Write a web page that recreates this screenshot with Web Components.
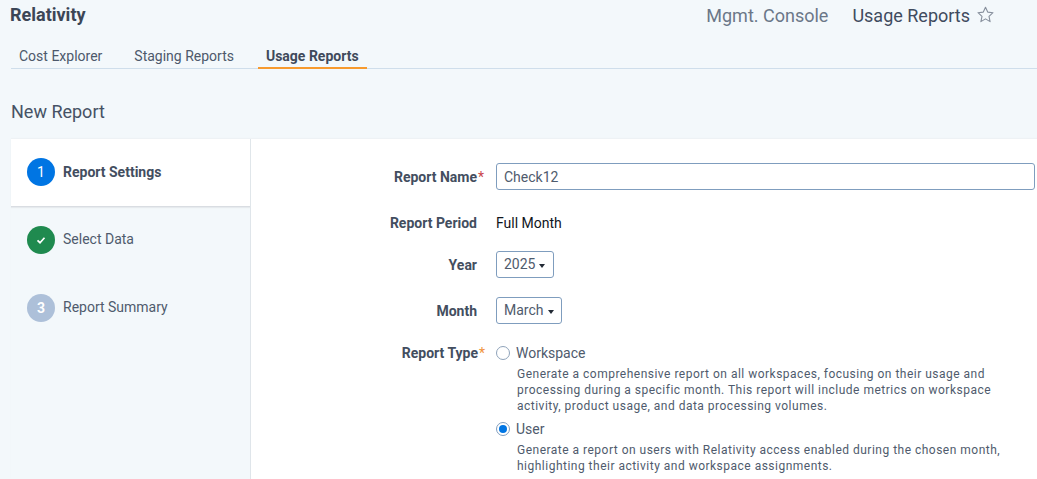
<!DOCTYPE html>
<html>
<head>
<meta charset="utf-8">
<title>New Report</title>
<style>
html, body { margin: 0; height: 479px; overflow: hidden; background: #f3f8fb; font-family: Roboto, "Liberation Sans", sans-serif; }
</style>
</head>
<body>
<app-header></app-header>
<nav-tabs></nav-tabs>
<page-title>New Report</page-title>
<report-wizard>
    <wizard-steps slot="steps"></wizard-steps>
    <report-form slot="form"></report-form>
</report-wizard>

<script>
class AppHeader extends HTMLElement {
    constructor(){
        super();
        this.attachShadow({mode:'open'});
        this.shadowRoot.innerHTML = `
            <style>
                :host{
                    display: flex;
                    height: 41px;
                    box-sizing: border-box;
                    padding: 5px 43px 0 10px;
                    justify-content: space-between;
                    color: #3e4a5c;
                }
                .brand{
                    font-size: 18px;
                    line-height: 20px;
                    font-weight: 700;
                    color: #3c4656;
                }
                .crumbs{
                    display: flex;
                    align-items: flex-start;
                    font-size: 18px;
                    line-height: 22px;
                }
                .parent{
                    color: #6b7788;
                    margin-right: 24px;
                }
                .current{
                    color: #3f4b5e;
                }
                svg{
                    margin: 1px 0 0 7px;
                }
            </style>
            <div class="brand">Relativity</div>
            <div class="crumbs">
                <span class="parent">Mgmt. Console</span>
                <span class="current">Usage Reports</span>
                <svg width="17" height="17" viewBox="0 0 17 17"><path d="M8.5 1.2l2.2 4.9 5.3.6-4 3.6 1.1 5.3-4.6-2.7-4.6 2.7 1.1-5.3-4-3.6 5.3-.6z" fill="none" stroke="#868f9c" stroke-width="1.1" stroke-linejoin="round"/></svg>
            </div>
        `;
    }
}

class NavTabs extends HTMLElement {
    constructor(){
        super();
        this.attachShadow({mode:'open'});
        this.shadowRoot.innerHTML = `
            <style>
                :host{
                    display: flex;
                    height: 28px;
                    box-sizing: border-box;
                    margin-left: 11px;
                    border-bottom: 1px solid #cfdeeb;
                    font-size: 14px;
                    color: #4d596b;
                }
                a{
                    display: block;
                    box-sizing: border-box;
                    height: 28px;
                    line-height: 30px;
                    padding: 0 8px;
                    margin-right: 16px;
                }
                a.on{
                    font-weight: 700;
                    color: #3f4a5b;
                    border-bottom: 2px solid #f79a2e;
                    margin-right: 0;
                }
            </style>
            <a>Cost Explorer</a>
            <a>Staging Reports</a>
            <a class="on">Usage Reports</a>
        `;
    }
}

class PageTitle extends HTMLElement {
    constructor(){
        super();
        this.attachShadow({mode:'open'});
        this.shadowRoot.innerHTML = `
            <style>
                :host{
                    display: block;
                    height: 70px;
                    box-sizing: border-box;
                    padding: 32px 0 0 11px;
                    font-size: 18px;
                    line-height: 22px;
                    color: #465265;
                }
            </style>
            <slot></slot>
        `;
    }
}

class ReportWizard extends HTMLElement {
    constructor(){
        super();
        this.attachShadow({mode:'open'});
        this.shadowRoot.innerHTML = `
            <style>
                :host{
                    display: flex;
                    height: 340px;
                    margin-left: 11px;
                    background: #fff;
                    box-shadow: 0 -1px 1px #eef2f5;
                }
            </style>
            <slot name="steps"></slot>
            <slot name="form"></slot>
        `;
    }
}

class WizardSteps extends HTMLElement {
    constructor(){
        super();
        this.attachShadow({mode:'open'});
        this.shadowRoot.innerHTML = `
            <style>
                :host{
                    display: block;
                    flex: none;
                    width: 240px;
                    box-sizing: border-box;
                    background: #f3f8fb;
                    border-right: 1px solid #dfe5ea;
                }
            </style>
            <step-item state="active" num="1">Report Settings</step-item>
            <step-item state="done">Select Data</step-item>
            <step-item state="todo" num="3">Report Summary</step-item>
        `;
    }
}

class StepItem extends HTMLElement {
    constructor(){
        super();
        this.attachShadow({mode:'open'});
        const state = this.getAttribute('state');
        const mark = state === 'done'
            ? '<svg width="10" height="10" viewBox="0 0 10 10"><path d="M1.5 5.3l2.5 2.4 4.5-5" fill="none" stroke="#fff" stroke-width="1.7"/></svg>'
            : this.getAttribute('num');
        this.shadowRoot.innerHTML = `
            <style>
                :host{
                    display: flex;
                    align-items: center;
                    height: 68px;
                    box-sizing: border-box;
                    padding: 0 0 2px 16px;
                    font-size: 14px;
                    color: #4f5b6d;
                }
                :host([state="active"]){
                    background: #fff;
                    border-bottom: 1px solid #d9dde2;
                    box-shadow: 0 1px 1px #e6eaee;
                    font-weight: 700;
                    color: #434e5f;
                    position: relative;
                }
                .dot{
                    width: 28px;
                    height: 28px;
                    border-radius: 50%;
                    margin-right: 8px;
                    display: flex;
                    align-items: center;
                    justify-content: center;
                    color: #fff;
                    font-size: 14px;
                    font-weight: 400;
                }
                .text{
                    margin-bottom: 2px;
                }
                :host([state="active"]) .text{ margin-bottom: 0; }
                :host([state="active"]) .dot{ background: #0075e3; }
                :host([state="done"]) .dot{ background: #1f8a4f; }
                :host([state="todo"]) .dot{ background: #adc0d9; font-weight: 700; }
            </style>
            <span class="dot">${mark}</span>
            <span class="text"><slot></slot></span>
        `;
    }
}

class ReportForm extends HTMLElement {
    constructor(){
        super();
        this.attachShadow({mode:'open'});
        this.shadowRoot.innerHTML = `
            <style>
                :host{
                    display: block;
                    flex: 1;
                    min-width: 0;
                    padding: 24px 2px 0 0;
                }
                input{
                    display: block;
                    width: 100%;
                    height: 27px;
                    box-sizing: border-box;
                    border: 1px solid #7f9dbe;
                    border-radius: 3px;
                    padding: 0 7px;
                    font: 14px Roboto, sans-serif;
                    color: #4f5b6d;
                    outline: none;
                }
                .value{
                    font-size: 14px;
                    line-height: 18px;
                    color: #10151c;
                }
            </style>
            <form-row label="Report Name" mark="red" gap="19"><input value="Check12"></form-row>
            <form-row label="Report Period" gap="15"><span class="value">Full Month</span></form-row>
            <form-row label="Year" gap="19"><drop-down style="padding-right: 8px">2025</drop-down></form-row>
            <form-row label="Month" gap="15"><drop-down>March</drop-down></form-row>
            <form-row label="Report Type" mark="orange" style="--label-shift: 1px">
                <radio-option title="Workspace">Generate a comprehensive report on all workspaces, focusing on their usage and<br>processing during a specific month. This report will include metrics on workspace<br>activity, product usage, and data processing volumes.</radio-option>
                <radio-option title="User" checked>Generate a report on users with Relativity access enabled during the chosen month,<br>highlighting their activity and workspace assignments.</radio-option>
            </form-row>
        `;
    }
}

class FormRow extends HTMLElement {
    constructor(){
        super();
        this.attachShadow({mode:'open'});
        const mark = this.getAttribute('mark');
        this.shadowRoot.innerHTML = `
            <style>
                :host{
                    display: flex;
                    align-items: flex-start;
                    margin-bottom: ${this.getAttribute('gap') || 0}px;
                }
                .label{
                    flex: none;
                    width: calc(226px + var(--label-shift, 0px));
                    height: 27px;
                    text-align: right;
                    font-size: 14px;
                    font-weight: 700;
                    line-height: 29px;
                    color: #434e5f;
                    position: relative;
                }
                .star{
                    position: absolute;
                    left: 100%;
                    top: 0;
                    margin-left: 1px;
                    font-weight: 400;
                    color: ${mark === 'red' ? '#c9464b' : '#f0923a'};
                }
                .control{
                    flex: 1;
                    min-width: 0;
                    margin-left: calc(19px - var(--label-shift, 0px));
                    min-height: 27px;
                    display: flex;
                    flex-direction: column;
                    align-items: flex-start;
                    justify-content: center;
                }
                ::slotted(input){ width: 100%; }
            </style>
            <div class="label">${this.getAttribute('label')}${mark ? '<span class="star">*</span>' : ''}</div>
            <div class="control"><slot></slot></div>
        `;
    }
}

class DropDown extends HTMLElement {
    constructor(){
        super();
        this.attachShadow({mode:'open'});
        this.shadowRoot.innerHTML = `
            <style>
                :host{
                    display: inline-flex;
                    align-items: center;
                    height: 27px;
                    box-sizing: border-box;
                    border: 1px solid #7f9dbe;
                    border-radius: 3px;
                    padding: 0 7px 2px;
                    font-size: 14px;
                    color: #4f5b6d;
                }
                i{
                    width: 0;
                    height: 0;
                    margin: 4px 0 0 4px;
                    border: 3px solid transparent;
                    border-top: 4px solid #222a35;
                    border-bottom: 0;
                }
            </style>
            <slot></slot><i></i>
        `;
    }
}

class RadioOption extends HTMLElement {
    constructor(){
        super();
        this.attachShadow({mode:'open'});
        const checked = this.hasAttribute('checked');
        this.shadowRoot.innerHTML = `
            <style>
                :host{
                    display: block;
                    padding-top: 5px;
                    margin-bottom: 1px;
                }
                .head{
                    display: flex;
                    align-items: center;
                    height: 18px;
                    font-size: 14px;
                    color: #4f5b6d;
                }
                .ring{
                    width: 14px;
                    height: 14px;
                    box-sizing: border-box;
                    border: 1px solid ${checked ? '#7f9dbe' : '#8fa3ba'};
                    border-radius: 50%;
                    margin-right: 6px;
                    display: flex;
                    align-items: center;
                    justify-content: center;
                }
                .ring b{
                    width: 8px;
                    height: 8px;
                    border-radius: 50%;
                    background: #0075e3;
                }
                .desc{
                    margin: 4px 0 0 21px;
                    font-size: 12px;
                    line-height: 16px;
                    letter-spacing: .49px;
                    color: #4f5b6d;
                    white-space: nowrap;
                }
            </style>
            <div class="head"><span class="ring">${checked ? '<b></b>' : ''}</span>${this.getAttribute('title')}</div>
            <div class="desc"><slot></slot></div>
        `;
    }
}

customElements.define('app-header', AppHeader);
customElements.define('nav-tabs', NavTabs);
customElements.define('page-title', PageTitle);
customElements.define('report-wizard', ReportWizard);
customElements.define('wizard-steps', WizardSteps);
customElements.define('step-item', StepItem);
customElements.define('report-form', ReportForm);
customElements.define('form-row', FormRow);
customElements.define('drop-down', DropDown);
customElements.define('radio-option', RadioOption);
</script>
</body>
</html>
